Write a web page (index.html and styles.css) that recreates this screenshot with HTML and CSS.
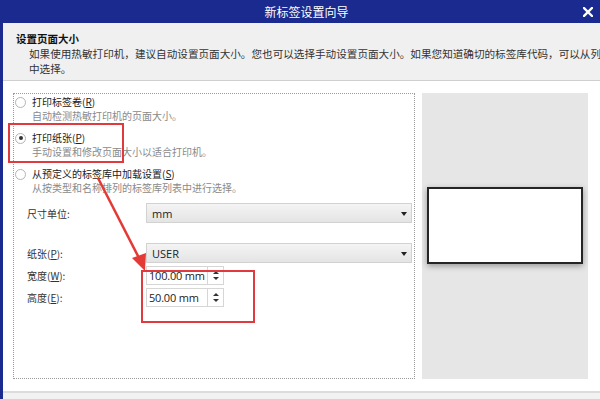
FILE: index.html
```html
<!DOCTYPE html>
<html lang="zh-CN">
<head>
  <meta charset="UTF-8">
  <title>新标签设置向导</title>
  <link rel="stylesheet" href="styles.css">
</head>
<body>
  <div class="window">
    <div class="titlebar">
      <span class="title">新标签设置向导</span>
      <svg class="close" width="10" height="10" viewBox="0 0 10 10">
        <path d="M1 1 L9 9 M9 1 L1 9" stroke="#fff" stroke-width="2.4" stroke-linecap="square"/>
      </svg>
    </div>

    <div class="header">
      <div class="heading">设置页面大小</div>
      <div class="desc">如果使用热敏打印机，建议自动设置页面大小。您也可以选择手动设置页面大小。如果您知道确切的标签库代码，可以从列表<br>中选择。</div>
    </div>

    <div class="content">
      <div class="options">
        <div class="option">
          <div class="option-label"><span class="radio"></span>打印标签卷(<u>R</u>)</div>
          <div class="option-sub">自动检测热敏打印机的页面大小。</div>
        </div>
        <div class="option">
          <div class="option-label"><span class="radio checked"></span>打印纸张(<u>P</u>)</div>
          <div class="option-sub">手动设置和修改页面大小以适合打印机。</div>
        </div>
        <div class="option">
          <div class="option-label"><span class="radio"></span>从预定义的标签库中加载设置(<u>S</u>)</div>
          <div class="option-sub">从按类型和名称排列的标签库列表中进行选择。</div>
        </div>

        <div class="form-row unit-row">
          <label>尺寸单位:</label>
          <div class="select">mm<span class="caret"></span></div>
        </div>
        <div class="form-row paper-row">
          <label>纸张(<u>P</u>):</label>
          <div class="select">USER<span class="caret"></span></div>
        </div>
        <div class="form-row size-row">
          <label>宽度(<u>W</u>):</label>
          <div class="spinner">
            <span class="spin-value">100.00 mm</span>
            <span class="spin-btn"><i class="up"></i><i class="down"></i></span>
          </div>
        </div>
        <div class="form-row size-row">
          <label>高度(<u>E</u>):</label>
          <div class="spinner">
            <span class="spin-value">50.00 mm</span>
            <span class="spin-btn"><i class="up"></i><i class="down"></i></span>
          </div>
        </div>
      </div>

      <div class="preview">
        <div class="label-sheet"></div>
      </div>
    </div>

    <div class="footer"></div>

    <!-- annotations drawn over the dialog -->
    <svg class="marks" width="600" height="399" viewBox="0 0 600 399">
      <rect x="9" y="124" width="114" height="38" fill="none" stroke="#e0393e" stroke-width="2"/>
      <rect x="142" y="271" width="112" height="51" fill="none" stroke="#e0393e" stroke-width="2"/>
      <line x1="98" y1="178" x2="139" y2="258" stroke="#e53935" stroke-width="2.5"/>
      <polygon points="145,271 132,258 146,253" fill="#e53935"/>
    </svg>
  </div>
</body>
</html>
```

FILE: styles.css
```css
body {
  margin: 0;
  font-family: "Noto Sans CJK SC", "Noto Sans", sans-serif;
  font-size: 10px;
  color: #222;
  background: #fff;
}

.window {
  position: relative;
  width: 600px;
  height: 399px;
  border-left: 3px solid #1b2a8e;
  box-sizing: border-box;
  overflow: hidden;
  display: flex;
  flex-direction: column;
}

.titlebar {
  height: 23px;
  background: #1b2a8e;
  color: #fff;
  display: flex;
  align-items: center;
  justify-content: center;
  position: relative;
  flex-shrink: 0;
}

.title {
  font-size: 12px;
  padding-left: 10px;
}

.close {
  position: absolute;
  right: 7px;
  top: 7px;
}

.header {
  height: 58px;
  background: #f0f0f0;
  border-bottom: 1px solid #cfcfcf;
  padding: 9px 0 0 13px;
  box-sizing: border-box;
  flex-shrink: 0;
  white-space: nowrap;
}

.heading {
  font-weight: bold;
  font-size: 10.5px;
  line-height: 14px;
  color: #111;
}

.desc {
  padding-left: 13px;
  font-size: 10.6px;
  line-height: 15px;
  color: #333;
}

.content {
  display: flex;
  gap: 7px;
  padding: 12px 0 0 10px;
  height: 310px;
  box-sizing: border-box;
  flex-shrink: 0;
}

.options {
  width: 402px;
  height: 286px;
  border: 1px dotted #9a9a9a;
  box-sizing: border-box;
  padding-top: 1px;
}

.option {
  margin-bottom: 8px;
}

.option-label {
  display: flex;
  align-items: center;
  line-height: 14px;
  color: #222;
}

.option-sub {
  padding-left: 18px;
  line-height: 14px;
  color: #8a8a8a;
}

.radio {
  width: 11px;
  height: 11px;
  border: 1px solid #b4b4b4;
  border-radius: 50%;
  background: #fff;
  margin: 0 6px 0 1px;
  box-sizing: border-box;
  position: relative;
}

.radio.checked::after {
  content: "";
  position: absolute;
  left: 2.5px;
  top: 2.5px;
  width: 4px;
  height: 4px;
  border-radius: 50%;
  background: #333;
}

.form-row {
  display: flex;
  align-items: center;
  padding-left: 13px;
}

.form-row label {
  width: 119px;
  color: #333;
}

.unit-row {
  margin-top: 2px;
}

.paper-row {
  margin-top: 20px;
}

.size-row {
  margin-top: 3px;
}

.select {
  flex: 1;
  margin-right: 2px;
  height: 20px;
  box-sizing: border-box;
  border: 1px solid #d2d2d2;
  background: linear-gradient(#f4f4f4, #e4e4e4);
  display: flex;
  align-items: center;
  padding-left: 5px;
  font-family: "Open Sans", "Noto Sans", sans-serif;
  font-size: 11px;
  color: #222;
  position: relative;
}

.caret {
  position: absolute;
  right: 4px;
  top: 8px;
  border-left: 3px solid transparent;
  border-right: 3px solid transparent;
  border-top: 4px solid #222;
}

.spinner {
  width: 78px;
  height: 19px;
  box-sizing: border-box;
  border: 1px solid #d6d6d6;
  display: flex;
  background: #fff;
}

.spin-value {
  flex: 1;
  padding-left: 2px;
  white-space: nowrap;
  overflow: hidden;
  font-family: "Open Sans", "Noto Sans", sans-serif;
  font-size: 11px;
  letter-spacing: -0.2px;
  line-height: 17px;
  color: #222;
}

.spin-btn {
  width: 15px;
  border-left: 1px solid #d6d6d6;
  display: flex;
  flex-direction: column;
  align-items: center;
  justify-content: center;
  gap: 3px;
}

.spin-btn i {
  display: block;
  border-left: 3px solid transparent;
  border-right: 3px solid transparent;
}

.spin-btn .up {
  border-bottom: 3px solid #333;
}

.spin-btn .down {
  border-top: 3px solid #333;
}

.preview {
  width: 166px;
  height: 286px;
  background: #e6e6e6;
  display: flex;
  align-items: center;
  justify-content: center;
  padding-bottom: 21px;
  box-sizing: border-box;
}

.label-sheet {
  width: 156px;
  height: 77px;
  box-sizing: border-box;
  background: #fff;
  border: 2px solid #252525;
  box-shadow: 0 2px 6px rgba(0, 0, 0, 0.35);
}

.footer {
  flex: 1;
  border-top: 2px solid #dcdcdc;
  background: #f2f2f2;
}

.marks {
  position: absolute;
  left: -3px;
  top: 0;
  pointer-events: none;
}
```
